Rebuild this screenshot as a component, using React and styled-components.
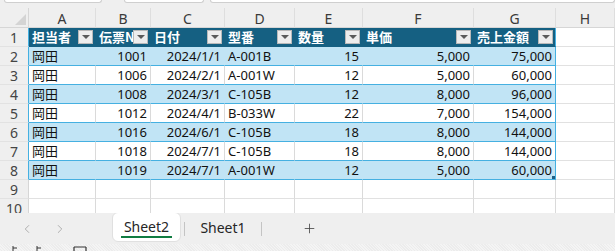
import styled, { createGlobalStyle } from 'styled-components'
import { ChevronLeft, ChevronRight, Plus } from 'lucide-react'

const GlobalStyle = createGlobalStyle`
  html, body {
    margin: 0;
    padding: 0;
    background: #efefef;
    overflow: hidden;
  }
`;

const Window = styled.div`
  width: 615px;
  height: 251px;
  display: flex;
  flex-direction: column;
  background: #efefef;
  font-family: 'Noto Sans', 'Noto Sans CJK JP', sans-serif;
  overflow: hidden;
`;

const TopStrip = styled.div`
  height: 8px;
  display: flex;
  flex-shrink: 0;
`;

const Ribbon = styled.div`
  height: 2px;
  margin-left: ${p => p.$left}px;
  width: ${p => p.$width}px;
  background: #fff;
  border: 1px solid #cfcfcf;
  border-top: none;
  border-radius: 0 0 5px 5px;
`;

const Sheet = styled.div`
  height: 205px;
  flex-shrink: 0;
  overflow: hidden;
  display: grid;
  grid-template-columns: 29px 67px 55px 74px 70px 68px 111px 82px 1fr;
  grid-template-rows: 20px;
  grid-auto-rows: 19px;
  background: #fff;
`;

const Corner = styled.div`
  position: relative;
  background: #efefef;
  border-right: 1px solid #d6d6d6;
  border-bottom: 1px solid #d6d6d6;
  &::after {
    content: '';
    position: absolute;
    right: 2px;
    bottom: 2px;
    width: 0;
    height: 0;
    border-left: 11px solid transparent;
    border-bottom: 11px solid #d4d4d4;
  }
`;

const ColHead = styled.div`
  background: #efefef;
  border-bottom: 1px solid #d6d6d6;
  border-right: 1px solid #dedede;
  display: flex;
  align-items: center;
  justify-content: center;
  font-size: 14px;
  color: #3a3a3a;
  padding-top: 1px;
  box-sizing: border-box;
`;

const RowHead = styled.div`
  background: #efefef;
  border-right: 1px solid ${p => (p.$table ? '#45b0e1' : '#d6d6d6')};
  border-bottom: 1px solid #e2e2e2;
  display: flex;
  align-items: center;
  justify-content: center;
  font-size: 14px;
  color: #444;
  box-sizing: border-box;
`;

const cellBg = { head: '#156082', band: '#c1e4f5', plain: '#fff', empty: '#fff' };

const Cell = styled.div`
  position: relative;
  box-sizing: border-box;
  background: ${p => cellBg[p.$kind]};
  border-bottom: 1px solid ${p => (p.$kind === 'empty' ? '#e1e1e1' : p.$kind === 'head' ? '#156082' : '#45b0e1')};
  border-right: 1px solid ${p =>
    p.$last ? '#45b0e1'
      : p.$kind === 'head' ? '#156082'
      : p.$kind === 'band' ? '#c1e4f5'
      : '#dadada'};
  display: flex;
  align-items: center;
  justify-content: ${p => (p.$right ? 'flex-end' : 'flex-start')};
  padding: 0 3px 0 3px;
  font-family: ${p => (p.$kind === 'head' ? "'Noto Sans CJK JP', sans-serif" : "'Noto Sans', 'Noto Sans CJK JP', sans-serif")};
  font-size: 13px;
  font-weight: ${p => (p.$kind === 'head' ? 700 : 400)};
  color: ${p => (p.$kind === 'head' ? '#fff' : '#111')};
  white-space: nowrap;
  overflow: hidden;
  line-height: 18px;
`;

const FilterButton = styled.span`
  position: absolute;
  right: 2px;
  top: 2px;
  width: 15px;
  height: 14px;
  box-sizing: border-box;
  background: #ededed;
  border: 1px solid #b9b9b9;
  display: flex;
  align-items: center;
  justify-content: center;
  &::after {
    content: '';
    width: 0;
    height: 0;
    border-left: 4px solid transparent;
    border-right: 4px solid transparent;
    border-top: 4px solid #5a5a5a;
  }
`;

const Handle = styled.span`
  position: absolute;
  right: 0;
  bottom: 0;
  width: 3px;
  height: 3px;
  background: #1f5f86;
`;

const TabBar = styled.div`
  height: 31px;
  flex-shrink: 0;
  display: flex;
  align-items: center;
  background: #efefef;
  font-family: 'Noto Sans', sans-serif;
`;

const Nav = styled.div`
  width: 112px;
  display: flex;
  gap: 19px;
  padding-left: 20px;
  box-sizing: border-box;
  color: #a0a0a0;
`;

const Tab = styled.div`
  width: ${p => p.$width}px;
  height: ${p => (p.$active ? 30 : 29)}px;
  align-self: flex-start;
  margin-top: ${p => (p.$active ? -1 : 0)}px;
  box-sizing: border-box;
  background: ${p => (p.$active ? '#fff' : 'transparent')};
  border: ${p => (p.$active ? '1px solid #e0e0e0' : 'none')};
  border-radius: 6px;
  display: flex;
  flex-direction: column;
  align-items: center;
  justify-content: center;
  font-size: 14px;
  color: #262626;
`;

const TabLabel = styled.span`
  padding: 2px 3px 1px;
  border-bottom: 2px solid ${p => (p.$active ? '#107c41' : 'transparent')};
  line-height: 17px;
`;

const Divider = styled.div`
  width: 1px;
  height: 14px;
  background: #c4c4c4;
  margin-left: ${p => p.$gap}px;
`;

const AddButton = styled.div`
  margin-left: 40px;
  display: flex;
  color: #444;
`;

const StatusBar = styled.div`
  flex: 1;
  background: repeating-linear-gradient(45deg, #f4f4f4 0 1px, #ececec 1px 2px);
  display: flex;
  align-items: flex-start;
  padding-left: 10px;
`;

const headers = ['担当者', '伝票No', '日付', '型番', '数量', '単価', '売上金額'];
const rightCols = [false, true, true, false, true, true, true];

const rows = [
  ['岡田', '1001', '2024/1/1', 'A-001B', '15', '5,000', '75,000'],
  ['岡田', '1006', '2024/2/1', 'A-001W', '12', '5,000', '60,000'],
  ['岡田', '1008', '2024/3/1', 'C-105B', '12', '8,000', '96,000'],
  ['岡田', '1012', '2024/4/1', 'B-033W', '22', '7,000', '154,000'],
  ['岡田', '1016', '2024/6/1', 'C-105B', '18', '8,000', '144,000'],
  ['岡田', '1018', '2024/7/1', 'C-105B', '18', '8,000', '144,000'],
  ['岡田', '1019', '2024/7/1', 'A-001W', '12', '5,000', '60,000'],
];

const letters = ['A', 'B', 'C', 'D', 'E', 'F', 'G', 'H'];

function App() {
  return (
    <>
      <GlobalStyle />
      <Window>
        <TopStrip>
          <Ribbon $left={4} $width={100} />
          <Ribbon $left={22} $width={82} />
          <Ribbon $left={6} $width={420} />
        </TopStrip>
        <Sheet>
          <Corner />
          {letters.map(l => <ColHead key={l}>{l}</ColHead>)}

          <RowHead $table>1</RowHead>
          {headers.map((h, i) => (
            <Cell key={h} $kind="head" $last={i === 6}>
              {h}
              <FilterButton />
            </Cell>
          ))}
          <Cell $kind="empty" />

          {rows.map((r, ri) => [
            <RowHead key={'h' + ri} $table>{ri + 2}</RowHead>,
            ...r.map((v, ci) => (
              <Cell
                key={ri + '-' + ci}
                $kind={ri % 2 === 0 ? 'band' : 'plain'}
                $right={rightCols[ci]}
                $last={ci === 6}
              >
                {v}
                {ri === rows.length - 1 && ci === 6 && <Handle />}
              </Cell>
            )),
            <Cell key={'e' + ri} $kind="empty" />,
          ])}

          {[9, 10].map(n => [
            <RowHead key={'r' + n}>{n}</RowHead>,
            ...letters.map(l => <Cell key={n + l} $kind="empty" />),
          ])}
        </Sheet>
        <TabBar>
          <Nav>
            <ChevronLeft size={14} strokeWidth={1.4} />
            <ChevronRight size={14} strokeWidth={1.4} />
          </Nav>
          <Tab $active $width={69}>
            <TabLabel $active>Sheet2</TabLabel>
          </Tab>
          <Divider $gap={3} />
          <Tab $width={76}>
            <TabLabel>Sheet1</TabLabel>
          </Tab>
          <Divider $gap={0} />
          <AddButton>
            <Plus size={15} strokeWidth={1.3} />
          </AddButton>
        </TabBar>
        <StatusBar>
          <svg width="90" height="7" viewBox="0 0 90 7">
            <path d="M3 2v5M3 4h4" stroke="#333" strokeWidth="1" fill="none" />
            <path d="M27 2v5M27 4h4" stroke="#333" strokeWidth="1" fill="none" />
            <path d="M64 3h12M64 3v4M76 3v4" stroke="#333" strokeWidth="1.2" fill="none" />
          </svg>
        </StatusBar>
      </Window>
    </>
  );
}

export default App;
